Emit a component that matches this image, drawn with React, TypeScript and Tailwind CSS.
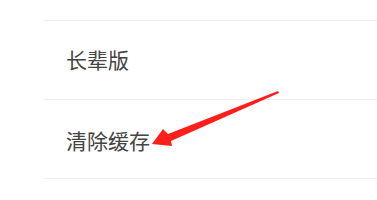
export default function App() {
  return (
    <div className="relative h-[200px] w-[377px] overflow-hidden bg-white font-['Noto_Sans_CJK_SC',sans-serif]">
      <div className="pl-[44px] pt-[20px]">
        <div className="flex h-[79px] items-center border-t border-[#eeeeee] pl-[22px] text-[21px] text-[#444444]">
          长辈版
        </div>
        <div className="flex h-[80px] items-center border-y border-[#eeeeee] pl-[22px] pt-[3px] text-[21px] text-[#444444]">
          清除缓存
        </div>
      </div>
      {/* annotation arrow */}
      <svg className="absolute left-0 top-0" width="377" height="200" viewBox="0 0 377 200">
        <polygon
          points="278,91 168,134 163,129 152,144 172,146 171,141 279,93"
          fill="#ff1f1a"
        />
      </svg>
    </div>
  )
}
